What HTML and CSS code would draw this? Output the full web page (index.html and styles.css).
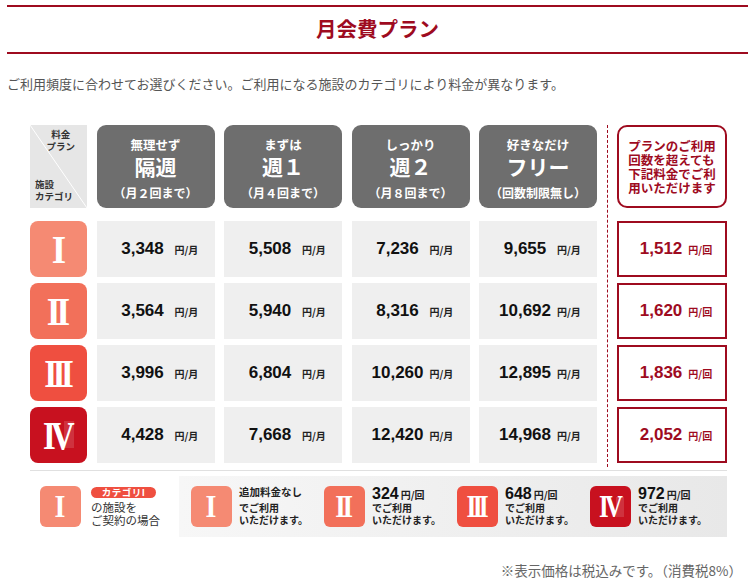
FILE: index.html
```html
<!DOCTYPE html>
<html lang="ja">
<head>
<meta charset="utf-8">
<title>月会費プラン</title>
<link rel="stylesheet" href="styles.css">
</head>
<body>
<div class="page">
  <header class="head"><h1>月会費プラン</h1></header>
  <p class="lead">ご利用頻度に合わせてお選びください。ご利用になる施設のカテゴリにより料金が異なります。</p>

  <div class="plans">
    <div class="sep"></div>

    <div class="corner">
      <div class="tr">料金<br>プラン</div>
      <div class="bl">施設<br>カテゴリ</div>
    </div>
    <div class="phead"><span class="s">無理せず</span><span class="b">隔週</span><span class="c">（月２回まで）</span></div>
    <div class="phead"><span class="s">まずは</span><span class="b">週１</span><span class="c">（月４回まで）</span></div>
    <div class="phead"><span class="s">しっかり</span><span class="b">週２</span><span class="c">（月８回まで）</span></div>
    <div class="phead"><span class="s">好きなだけ</span><span class="b">フリー</span><span class="c">（回数制限無し）</span></div>
    <div class="xhead"><p>プランのご利用<br>回数を超えても<br>下記料金でご利<br>用いただけます</p></div>

    <div class="cat c1"><span class="rn r1">I</span></div>
    <div class="price"><b>3,348</b><span class="unit">円/月</span></div>
    <div class="price"><b>5,508</b><span class="unit">円/月</span></div>
    <div class="price"><b>7,236</b><span class="unit">円/月</span></div>
    <div class="price"><b>9,655</b><span class="unit">円/月</span></div>
    <div class="xprice"><b>1,512</b><span class="unit">円/回</span></div>

    <div class="cat c2"><span class="rn r2">II</span></div>
    <div class="price"><b>3,564</b><span class="unit">円/月</span></div>
    <div class="price"><b>5,940</b><span class="unit">円/月</span></div>
    <div class="price"><b>8,316</b><span class="unit">円/月</span></div>
    <div class="price"><b>10,692</b><span class="unit">円/月</span></div>
    <div class="xprice"><b>1,620</b><span class="unit">円/回</span></div>

    <div class="cat c3"><span class="rn r3">III</span></div>
    <div class="price"><b>3,996</b><span class="unit">円/月</span></div>
    <div class="price"><b>6,804</b><span class="unit">円/月</span></div>
    <div class="price"><b>10,260</b><span class="unit">円/月</span></div>
    <div class="price"><b>12,895</b><span class="unit">円/月</span></div>
    <div class="xprice"><b>1,836</b><span class="unit">円/回</span></div>

    <div class="cat c4"><span class="rn r4">IV</span></div>
    <div class="price"><b>4,428</b><span class="unit">円/月</span></div>
    <div class="price"><b>7,668</b><span class="unit">円/月</span></div>
    <div class="price"><b>12,420</b><span class="unit">円/月</span></div>
    <div class="price"><b>14,968</b><span class="unit">円/月</span></div>
    <div class="xprice"><b>2,052</b><span class="unit">円/回</span></div>
  </div>

  <div class="rule"></div>

  <div class="legend">
    <div class="lg-key">
      <div class="cat mini c1"><span class="rn r1">I</span></div>
      <div class="key-text">
        <span class="pill">カテゴリI</span>
        <p>の施設を<br>ご契約の場合</p>
      </div>
    </div>
    <div class="gbox">
      <div class="gi">
        <div class="cat mini c1"><span class="rn r1">I</span></div>
        <div class="t"><div class="l1 plain">追加料金なし</div><div>でご利用</div><div>いただけます。</div></div>
      </div>
      <div class="gi">
        <div class="cat mini c2"><span class="rn r2">II</span></div>
        <div class="t"><div class="l1"><b>324</b><span class="u">円/回</span></div><div>でご利用</div><div>いただけます。</div></div>
      </div>
      <div class="gi">
        <div class="cat mini c3"><span class="rn r3">III</span></div>
        <div class="t"><div class="l1"><b>648</b><span class="u">円/回</span></div><div>でご利用</div><div>いただけます。</div></div>
      </div>
      <div class="gi">
        <div class="cat mini c4"><span class="rn r4">IV</span></div>
        <div class="t"><div class="l1"><b>972</b><span class="u">円/回</span></div><div>でご利用</div><div>いただけます。</div></div>
      </div>
    </div>
  </div>

  <p class="note">※表示価格は税込みです。（消費税8%）</p>
</div>
</body>
</html>
```

FILE: styles.css
```css
* { box-sizing: border-box; }

body {
  margin: 0;
  background: #fff;
  font-family: "Noto Sans CJK JP", "Noto Sans", sans-serif;
  color: #333;
}

.page {
  margin-left: 7px;
  padding-top: 5px;
}

/* title bar */
.head {
  height: 49px;
  border-top: 2px solid #9e0b1f;
  border-bottom: 2px solid #9e0b1f;
  display: flex;
  align-items: center;
  justify-content: center;
  padding-bottom: 2px;
}
.head h1 {
  margin: 0;
  font-size: 20.5px;
  line-height: 1;
  font-weight: 700;
  color: #9e0b1f;
}

.lead {
  margin: 21px 0 0;
  font-size: 13px;
  line-height: 18px;
  color: #555;
}

/* plan table */
.plans {
  margin: 32px 0 0 23px;
  width: 697px;
  display: grid;
  grid-template-columns: 57px repeat(4, 118px) 1px 110px;
  grid-template-rows: 90px repeat(4, 56px);
  column-gap: 9.5px;
  row-gap: 6px;
}

.sep {
  grid-column: 6;
  grid-row: 1 / -1;
  border-left: 1px dashed #9e0b1f;
  margin-bottom: -4px;
}

.corner {
  height: 83px;
  background: linear-gradient(to top right, #e6e6e6 calc(50% - 0.8px), #fff 50%, #e6e6e6 calc(50% + 0.8px));
  display: flex;
  flex-direction: column;
  justify-content: space-between;
  padding: 4px 5px 6px 5px;
  font-size: 9.5px;
  line-height: 11.5px;
  font-weight: 700;
  color: #333;
}
.corner .tr {
  align-self: flex-end;
  text-align: center;
  margin-right: 7px;
}

.phead {
  height: 83px;
  border-radius: 9px;
  background: #6e6e6e;
  color: #fff;
  text-align: center;
  padding-top: 12px;
  font-weight: 700;
}
.phead span { display: block; }
.phead .s { font-size: 12.5px; line-height: 16px; }
.phead .b { font-size: 21px; line-height: 26px; }
.phead .c { font-size: 12px; line-height: 16px; margin-top: 6px; }

.xhead {
  height: 83px;
  border: 2px solid #9e0b1f;
  border-radius: 10px;
  display: flex;
  align-items: center;
  justify-content: center;
  color: #9e0b1f;
  font-size: 12.5px;
  line-height: 14px;
  font-weight: 700;
}
.xhead p { margin: 0; }

/* category badges */
.cat {
  border-radius: 8px;
  display: flex;
  align-items: center;
  justify-content: center;
  position: relative;
  overflow: hidden;
}
.c1 { background: #f58a73; }
.c2 { background: #f2705a; }
.c3 { background: #ef4f40; }
.c4 { background: #c8111f; }
.c4::before {
  content: "";
  position: absolute;
  left: 34px;
  top: 14px;
  width: 10px;
  height: 27px;
  background: rgba(255, 255, 255, 0.14);
}

.rn {
  position: relative;
  display: inline-block;
  font-family: "Liberation Serif", "Times New Roman", serif;
  font-weight: 700;
  color: #fff;
  font-size: 41px;
  line-height: 1;
}
.r1 { transform: scaleX(0.9); }
.r2 { letter-spacing: -0.12em; padding-right: 0.12em; transform: scaleX(0.87); }
.r3 { letter-spacing: -0.145em; padding-right: 0.145em; transform: scaleX(0.82); }
.r4 { letter-spacing: -0.145em; padding-right: 0.145em; transform: scaleX(0.8); }

/* price cells */
.price {
  background: #efefef;
  padding-left: 14px;
  line-height: 56px;
  font-family: "Liberation Sans", Arial, sans-serif;
  white-space: nowrap;
}
.price b {
  display: inline-block;
  width: 64px;
  text-align: center;
  font-size: 17px;
  color: #111;
}
.unit {
  font-family: "Noto Sans CJK JP", sans-serif;
  font-size: 10px;
  font-weight: 700;
  color: #222;
}

.xprice {
  border: 2px solid #9e0b1f;
  padding-left: 8px;
  line-height: 52px;
  text-align: center;
  font-family: "Liberation Sans", Arial, sans-serif;
  white-space: nowrap;
  color: #9e0b1f;
}
.xprice b { font-size: 17px; }
.xprice .unit { color: #9e0b1f; margin-left: 6px; }

/* legend */
.rule {
  margin: 7px 0 0 23px;
  width: 697px;
  height: 1px;
  background: #e0e0e0;
}

.legend {
  margin: 5px 0 0 23px;
  width: 697px;
  height: 61px;
  display: flex;
  align-items: center;
}

.mini {
  width: 41px;
  height: 41px;
  flex: none;
  border-radius: 6px;
}
.mini .rn { font-size: 31px; }
.mini.c4::before { left: 26px; top: 11px; width: 8px; height: 20px; }

.lg-key {
  margin-left: 10px;
  width: 139px;
  display: flex;
  align-items: flex-start;
  gap: 10px;
}
.key-text { padding-top: 1px; }
.pill {
  display: block;
  width: 65px;
  height: 11px;
  border-radius: 6px;
  background: #ef4f40;
  color: #fff;
  font-size: 9.5px;
  line-height: 11px;
  font-weight: 700;
  text-align: center;
  letter-spacing: 0.5px;
}
.key-text p {
  margin: 3px 0 0;
  font-size: 11.5px;
  line-height: 13px;
  color: #333;
}

.gbox {
  margin-left: auto;
  width: 548px;
  height: 61px;
  background: linear-gradient(to right, #f7f7f7, #e8e8e8);
  display: flex;
  align-items: center;
  padding-left: 12px;
}
.gi {
  width: 133px;
  display: flex;
  align-items: flex-start;
  gap: 7px;
}
.gi .t {
  font-size: 10px;
  line-height: 12px;
  font-weight: 700;
  color: #222;
  white-space: nowrap;
}
.gi .l1 { height: 16px; line-height: 16px; }
.gi .l1.plain { font-size: 10.5px; line-height: 12px; }
.gi .l1 b {
  font-family: "Liberation Sans", Arial, sans-serif;
  font-size: 16px;
  color: #111;
}
.gi .l1 .u { font-size: 10px; margin-left: 2px; }

.note {
  margin: 24px 6px 0 0;
  text-align: right;
  font-size: 13.5px;
  line-height: 18px;
  color: #666;
}
```
